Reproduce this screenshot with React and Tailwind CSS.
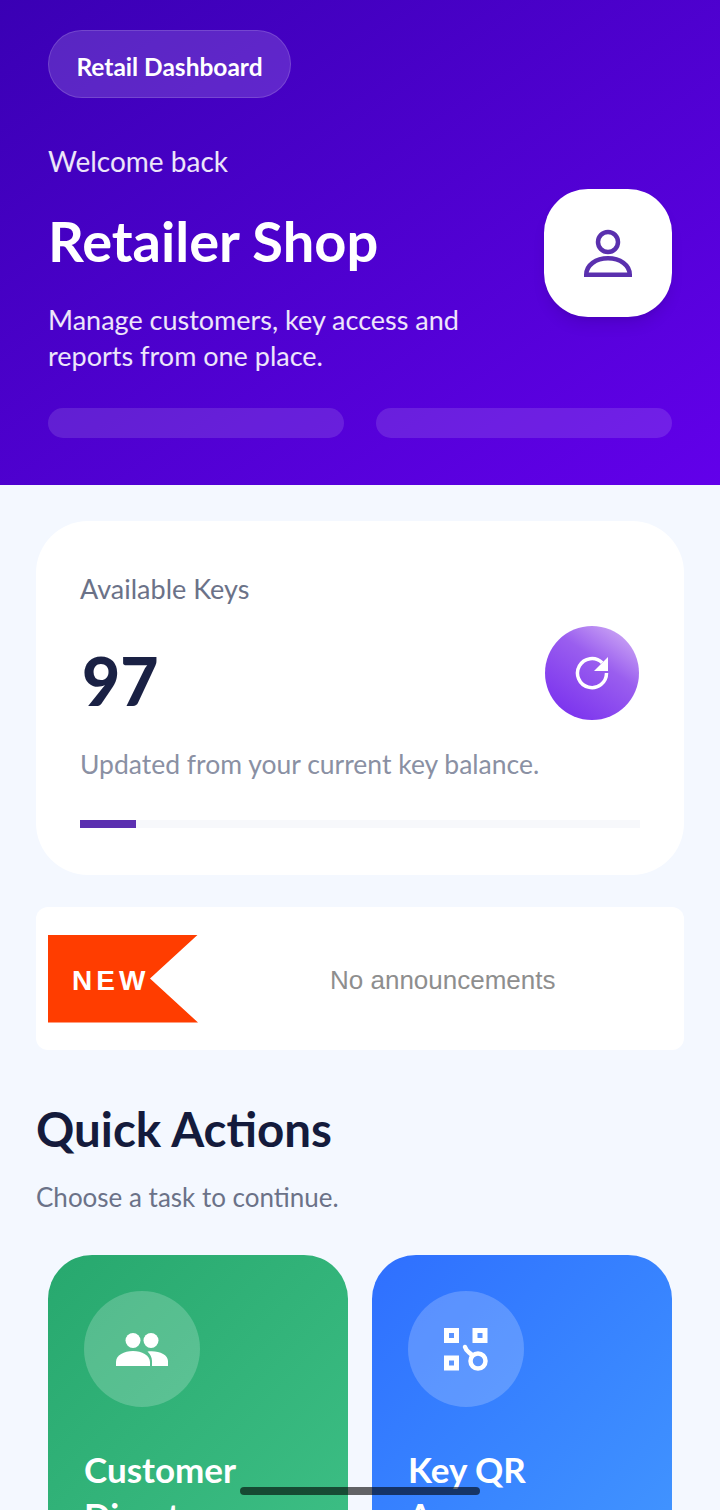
import React from "react";

const UserIcon = () => (
  <svg width="48" height="48" viewBox="0 0 48 48" fill="none" stroke="#5a30ae" strokeWidth="4.500">
    <circle cx="24" cy="13" r="10" />
    <path d="M2.250 45.750H45.750C45.750 36 36 29.250 24 29.250S2.250 36 2.250 45.750z" />
  </svg>
);

const RefreshIcon = () => (
  <svg width="34" height="34" viewBox="0 0 34 34" fill="none">
    <path d="M27.200 6.800A14.500 14.500 0 1 0 31.500 17" stroke="#fff" strokeWidth="3.500" />
    <path d="M33 1V15H19z" fill="#fff" />
  </svg>
);

const PeopleIcon = () => (
  <svg width="52" height="33" viewBox="0 0 52 33" fill="#fff">
    <circle cx="17" cy="7.500" r="7.500" />
    <circle cx="35" cy="7.500" r="7.500" />
    <path d="M0 33v-4c0-7 8-11 17-11s16.500 4 17 11v4z" />
    <path d="M36 33v-5c0-4-2-7-4.500-9.500 10-1.500 20.500 2.500 20.500 9.500v5z" />
  </svg>
);

const KeyQrIcon = () => (
  <svg width="44" height="43" viewBox="0 0 44 43" fill="none" stroke="#fff">
    <rect x="2.500" y="2.500" width="10" height="10" strokeWidth="5" />
    <rect x="31" y="2.500" width="10" height="10" strokeWidth="5" />
    <rect x="2.500" y="30" width="10" height="10" strokeWidth="5" />
    <circle cx="34" cy="33" r="7.500" strokeWidth="4.500" />
    <path d="M21 19c1 4 4 5 7 8" strokeWidth="4.500" strokeLinecap="round" />
  </svg>
);

const ActionCard = ({ bg, icon, line1, line2 }) => (
  <div className={`h-[300px] rounded-[44px] px-9 pt-9 ${bg}`}>
    <div className="flex h-[116px] w-[116px] items-center justify-center rounded-full bg-white/20">{icon}</div>
    <div className="mt-[39px] text-[35px] font-bold leading-[46px] text-white">
      {line1}
      <br />
      {line2}
    </div>
  </div>
);

export default function App() {
  return (
    <div className="relative h-[1510px] w-[720px] overflow-hidden bg-[#f4f8ff] font-['Lato',sans-serif]">
      <header className="h-[485px] bg-gradient-to-br from-[#3a00b4] to-[#6200ea] px-12 pt-[30px] text-white">
        <div className="flex h-[68px] w-[243px] items-center justify-center rounded-full border border-white/15 bg-white/15 pt-[7px] text-[24.5px] font-bold">
          Retail Dashboard
        </div>
        <div className="mt-[45px] flex items-start justify-between">
          <div>
            <p className="text-[28px] leading-9 text-white/90">Welcome back</p>
            <h1 className="mt-[26px] text-[56px] font-bold leading-[72px]">Retailer Shop</h1>
            <p className="mt-[25px] text-[27px] leading-9 text-white/90">
              Manage customers, key access and
              <br />
              reports from one place.
            </p>
          </div>
          <div className="mt-[46px] flex h-[128px] w-[128px] shrink-0 items-center justify-center rounded-[44px] bg-white shadow-lg">
            <UserIcon />
          </div>
        </div>
        <div className="mt-[34px] grid grid-cols-2 gap-8">
          <div className="h-[30px] rounded-2xl bg-white/12"></div>
          <div className="h-[30px] rounded-2xl bg-white/12"></div>
        </div>
      </header>

      <main className="px-9 pt-9">
        <section className="h-[354px] rounded-[52px] bg-white px-11 pt-[50px]">
          <p className="text-[27px] leading-9 text-[#6b7288]">Available Keys</p>
          <div className="mt-[19px] flex h-[94px] items-center justify-between">
            <span className="ml-[2px] mt-4 text-[66px] font-black leading-[88px] text-[#1a2144]">97</span>
            <div className="mr-[1px] flex h-[94px] w-[94px] items-center justify-center rounded-full bg-[linear-gradient(35deg,#7429ee,#9a5eef_60%,#d9b9f6)]">
              <RefreshIcon />
            </div>
          </div>
          <p className="mt-[26px] text-[26.500px] leading-9 text-[#8a90a3]">Updated from your current key balance.</p>
          <div className="mt-[38px] h-2 w-full bg-[#f7f8fb]">
            <div className="h-2 w-14 bg-[#5b2fb0]"></div>
          </div>
        </section>

        <section className="mt-8 flex h-[143px] items-center rounded-xl bg-white pl-3">
          <div className="flex h-[88px] w-[150px] items-center bg-[#ff3d00] pl-6 pt-1 font-['Liberation_Sans',sans-serif] text-[28px] font-bold tracking-[4px] text-white [clip-path:polygon(0_0,100%_0,68%_50%,100%_100%,0_100%)]">
            NEW
          </div>
          <p className="ml-[132px] mt-1 font-['Liberation_Sans',sans-serif] text-[26px] text-[#8e8e8e]">No announcements</p>
        </section>

        <h2 className="mt-[49px] text-[47.500px] font-bold leading-[60px] text-[#141b3c]">Quick Actions</h2>
        <p className="mt-[20px] text-[26px] leading-9 text-[#6b7288]">Choose a task to continue.</p>
      </main>

      <div className="mt-[40px] grid grid-cols-2 gap-6 px-12">
        <ActionCard bg="bg-gradient-to-br from-[#27a86e] to-[#3dbf85]" icon={<PeopleIcon />} line1="Customer" line2="Directory" />
        <ActionCard bg="bg-gradient-to-br from-[#2f6fff] to-[#4295ff]" icon={<KeyQrIcon />} line1="Key QR" line2="Access" />
      </div>

      <div className="absolute bottom-[15px] left-[240px] h-2 w-[240px] rounded-full bg-black/60"></div>
    </div>
  );
}
